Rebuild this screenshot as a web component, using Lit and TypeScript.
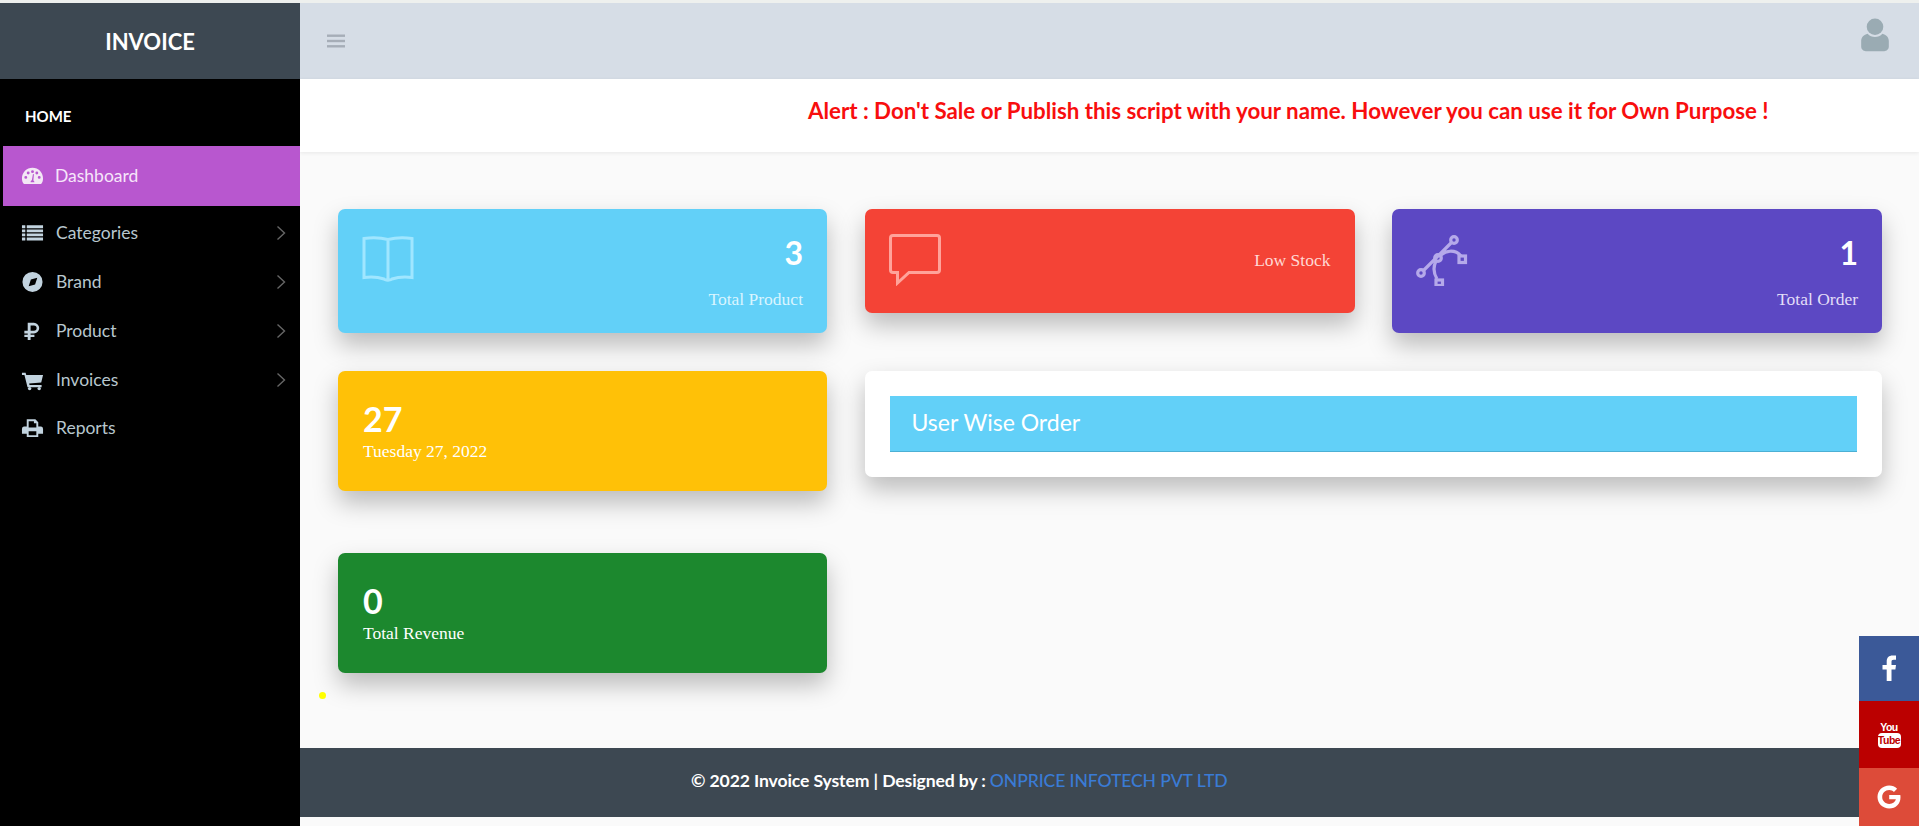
import { LitElement, html, css, svg } from "lit";
import { customElement } from "lit/decorators.js";

const navIcons: Record<string, unknown> = {
  gauge: svg`<path fill-rule="evenodd" d="M12 4C5.800 4 1 8.900 1 15c0 2 .5 3.600 1.400 5.200.2.400.5.600 1 .6h17.200c.5 0 .8-.2 1-.6.900-1.600 1.400-3.200 1.400-5.200 0-6.100-4.800-11-11-11zM5 15.500a1.500 1.500 0 1 1 0-3 1.500 1.500 0 0 1 0 3zm2.500-4.600a1.500 1.500 0 1 1 0-3 1.500 1.500 0 0 1 0 3zM12 9.500A1.500 1.500 0 1 1 12 6.500a1.500 1.500 0 0 1 0 3zm7 6a1.500 1.500 0 1 1 0-3 1.500 1.500 0 0 1 0 3zm-2.500-4.600a1.500 1.500 0 1 1 0-3 1.500 1.500 0 0 1 0 3zM14 19h-4c0-1 .6-1.800 1.300-2L12.500 10.500l1 .1-.6 6.500c.6.300 1.100 1 1.100 1.900z"/>`,
  list: svg`<path d="M1 4.500h3.500v3H1zM6 4.500h17v3H6zM1 8.800h3.500v3H1zM6 8.800h17v3H6zM1 13h3.500v3H1zM6 13h17v3H6zM1 17.300h3.500v3H1zM6 17.300h17v3H6z"/>`,
  compass: svg`<path fill-rule="evenodd" d="M12 2a10.500 10.500 0 1 0 0 21 10.500 10.500 0 0 0 0-21zM8 17l2.300-7.200L17 8l-2.300 7.200z"/>`,
  rub: svg`<path fill-rule="evenodd" d="M7 4h6.500a5.500 5.500 0 0 1 0 11h-3.500v1.500H14v2.400h-4V22H7v-3.100H3.500v-2.400H7V15H3.500v-2.700H7zm3 2.700v5.600h3.500a2.800 2.800 0 0 0 0-5.600z"/>`,
  cart: svg`<path d="M1 5h3.800l.7 2.200H23l-1.900 8-12.600 1 .4 1.600h12.600V20H6.800L3.600 7.200H1z"/><circle cx="9" cy="21.500" r="1.800"/><circle cx="19" cy="21.500" r="1.800"/>`,
  print: svg`<path fill-rule="evenodd" d="M6 3.500h9l3 3v4.500h3a2.500 2.500 0 0 1 2 2.500v5h-5V22H6v-3.500H1v-5A2.500 2.500 0 0 1 3 11h3zM8 5.500v6.500h8V7.500h-2.500v-2zM8 16v4h8v-4z"/>`,
};

const items = [
  { label: "Categories", icon: "list", arrow: true },
  { label: "Brand", icon: "compass", arrow: true },
  { label: "Product", icon: "rub", arrow: true },
  { label: "Invoices", icon: "cart", arrow: true },
  { label: "Reports", icon: "print", arrow: false },
];

@customElement("app-root")
export class AppRoot extends LitElement {
  static styles = css`
    :host { display: block; height: 826px; overflow: hidden; position: relative; background: #fff; font-family: "Lato", "Liberation Sans", sans-serif; }
    * { box-sizing: border-box; }
    .page { display: flex; height: 826px; padding-top: 3px; background: #eef0ee; }
    .side { width: 300px; flex: none; background: #000; display: flex; flex-direction: column; }
    .brand { height: 76px; background: #3d4852; color: #fff; font-size: 22px; font-weight: 700; display: flex; align-items: center; justify-content: center; }
    .home { height: 67px; display: flex; align-items: center; padding: 6px 0 0 25px; color: #fff; font-size: 15px; font-weight: 700; }
    .item { height: 49px; display: flex; align-items: center; color: #b8c7ce; font-size: 17.500px; padding-left: 21px; position: relative; }
    .item svg.ic { width: 23px; height: 23px; fill: #c2d3df; margin-right: 12px; flex: none; }
    .active { height: 60px; margin: 0 0 2px 3px; padding: 0 0 2px 18px; background: #b857cf; color: #f6e6fa; }
    .active svg.ic { fill: #f3e7f5; margin-right: 11px; }
    .last { padding-bottom: 2px; }
    .chev { position: absolute; right: 14px; top: 17px; width: 10px; height: 16px; fill: none; stroke: #666; stroke-width: 1.400; }
    .main { flex: 1; min-width: 0; background: #fafafa; display: flex; flex-direction: column; }
    .top { height: 76px; background: #d6dde6; display: flex; align-items: center; justify-content: space-between; padding: 0 30px 0 27px; flex: none; }
    .bars { width: 18px; height: 14px; fill: #a6adb7; }
    .user { width: 28px; height: 35px; fill: #9aabb3; margin-bottom: 12px; }
    .alert { height: 73px; flex: none; background: #fff; color: #f80e0e; font-size: 22.300px; font-weight: 700; padding: 18px 0 0 508px; box-shadow: 0 1px 4px rgba(0,0,0,.08); white-space: nowrap; }
    .grid { flex: 1; display: grid; grid-template-columns: 489px 490px 1fr; column-gap: 37.500px; align-content: start; align-items: start; padding: 57px 37px 0 38px; }
    .r2 { margin-top: 38px; }
    .r3 { margin-top: 62px; }
    .card { border-radius: 7px; color: #fff; box-shadow: 0 12px 24px rgba(0,0,0,.25); padding: 24px; display: flex; justify-content: space-between; }
    .card svg { width: 54px; height: 54px; fill: none; flex: none; margin-top: -1px; }
    .tall { height: 124px; }
    .right { text-align: right; font-family: "Liberation Serif", serif; font-size: 17.500px; display: flex; flex-direction: column; align-items: flex-end; }
    .num { font-family: "Lato", sans-serif; font-weight: 700; font-size: 32px; line-height: 38px; margin-bottom: 17px; padding-top: 1px; }
    .blue { background: #62d0f8; } .blue svg { stroke: #a0e6ff; } .blue .lbl { color: #d9f5ff; }
    .red { background: #f44336; height: 104px; align-items: flex-start; } .red svg { stroke: #ffa39a; } .red .lbl { color: #ffd9d4; margin-top: 17px; }
    .purple { background: #5c48c3; } .purple svg { stroke: #b5a9ea; } .purple .lbl { color: #e3def8; }
    .stat { height: 120px; display: block; padding: 29px 25px 0; font-family: "Liberation Serif", serif; font-size: 17.500px; line-height: 20px; }
    .stat .num { margin: 0 0 3px; padding: 0; display: block; font-size: 34px; line-height: 38px; }
    .yellow { background: #ffc107; } .green { background: #1c882e; }
    .panel { grid-column: span 2; background: #fff; height: 106px; padding: 25px; color: #fff; display: block; }
    .panel div { height: 56px; background: #62d0f8; border-bottom: 1px solid #4cb0d4; font-size: 23px; display: flex; align-items: center; padding: 0 0 4px 22px; }
    .foot { flex: none; height: 69px; background: #3d4852; margin-bottom: 9px; color: #fff; font-size: 17.600px; letter-spacing: -0.120px; font-weight: 700; padding: 22px 0 0 391px; white-space: nowrap; }
    .foot a { color: #3a7bd5; font-weight: 500; text-decoration: none; }
    .dot { position: absolute; left: 319px; top: 692px; width: 7px; height: 7px; border-radius: 50%; background: #ffff00; }
    .social { position: absolute; right: 0; top: 636px; width: 60px; display: flex; flex-direction: column; }
    .social > div { display: flex; align-items: center; justify-content: center; color: #fff; }
    .social svg { fill: #fff; }
    .fb { height: 65px; background: #3b5998; } .gp { height: 58px; background: #dd4b39; }
    .yt { height: 67px; background: #bb0000; flex-direction: column; font-family: "Liberation Sans", sans-serif; font-weight: 700; font-size: 10.500px; letter-spacing: -0.500px; }
    .you { line-height: 11px; }
    .tube { width: 23px; height: 15px; border-radius: 4px; background: #fff; color: #bb0000; line-height: 15px; text-align: center; }
    .fb svg { width: 16px; height: 26px; margin-bottom: 2px; } .gp svg { width: 24px; height: 24px; margin-bottom: 1px; }
  `;

  render() {
    return html`
      <div class="page">
        <aside class="side">
          <div class="brand">INVOICE</div>
          <div class="home">HOME</div>
          <div class="item active"><svg class="ic" viewBox="0 0 24 24">${navIcons.gauge}</svg>Dashboard</div>
          ${items.map((i) => html`
            <div class="item ${i.arrow ? "" : "last"}">
              <svg class="ic" viewBox="0 0 24 24">${navIcons[i.icon]}</svg>${i.label}
              ${i.arrow ? html`<svg class="chev" viewBox="0 0 10 16"><path d="M1.500 1.500 8.500 8l-7 6.500"/></svg>` : ""}
            </div>`)}
        </aside>
        <main class="main">
          <div class="top">
            <svg class="bars" viewBox="0 0 18 14"><rect y="0.500" width="18" height="2.400"/><rect y="5.800" width="18" height="2.400"/><rect y="11.100" width="18" height="2.400"/></svg>
            <svg class="user" viewBox="0 0 30 38"><circle cx="15" cy="9.500" r="9"/><path d="M7 17c2 2.500 5 3.500 8 3.500s6-1 8-3.500c4 .8 7 4 7 8v6c0 3-2.500 5-5 5H5c-2.500 0-5-2-5-5v-6c0-4 3-7.200 7-8z"/></svg>
          </div>
          <div class="alert">Alert : Don't Sale or Publish this script with your name. However you can use it for Own Purpose !</div>
          <div class="grid">
            <div class="card blue tall">
              <svg viewBox="0 0 54 54"><path stroke-width="3" d="M2 6.500c8-1 16-1 24 1 8-2 16-2 24-1v39c-8-1-14-.5-20 1.500-1 1.500-7 1.500-8 0-6-2-12-2.500-20-1.500zM26 7.500v40"/></svg>
              <div class="right"><span class="num">3</span><span class="lbl">Total Product</span></div>
            </div>
            <div class="card red">
              <svg viewBox="0 0 54 54"><path stroke-width="3" d="M4 3.500h44c1.500 0 2.500 1 2.500 2.500v32c0 1.500-1 2.500-2.500 2.500H20L8.500 51V40.500H4c-1.500 0-2.500-1-2.500-2.500V6c0-1.500 1-2.500 2.500-2.500z"/></svg>
              <div class="right"><span class="lbl">Low Stock</span></div>
            </div>
            <div class="card purple tall">
              <svg viewBox="0 0 54 54"><g stroke-width="3.200"><path d="M7 39 36 10M23 25c6-7 16-8 22-1M20 29c-3 6-2 13 1 18"/><circle cx="5" cy="41" r="3.300"/><circle cx="22" cy="26" r="3.300"/><circle cx="38" cy="8" r="3.300"/><rect x="43" y="24" width="6.500" height="6.500"/><rect x="20" y="48" width="6.500" height="5.500"/></g></svg>
              <div class="right"><span class="num">1</span><span class="lbl">Total Order</span></div>
            </div>
            <div class="card stat yellow r2"><span class="num">27</span>Tuesday 27, 2022</div>
            <div class="card panel r2"><div>User Wise Order</div></div>
            <div class="card stat green r3"><span class="num">0</span>Total Revenue</div>
          </div>
          <div class="foot">© 2022 Invoice System | Designed by : <a>ONPRICE INFOTECH PVT LTD</a></div>
        </main>
      </div>
      <div class="dot"></div>
      <div class="social">
        <div class="fb"><svg viewBox="0 0 16 26"><path d="M10.500 26V14.500h3.900l.6-4.600h-4.500V7c0-1.300.4-2.200 2.300-2.200H15V.6C14.500.5 13.100.4 11.500.4 8 .4 5.700 2.500 5.700 6.300v3.600H1.500v4.600h4.200V26z"/></svg></div>
        <div class="yt"><span class="you">You</span><span class="tube">Tube</span></div>
        <div class="gp"><svg viewBox="0 0 24 24"><path d="M12.200 10v4.300h6.700c-.6 2.700-2.900 4.600-6.700 4.600-4 0-7-3.100-7-6.900s3-6.900 7-6.900c1.900 0 3.500.7 4.700 1.800l3.200-3.200C18 1.700 15.300.5 12.200.5 5.700.5.500 5.600.5 12s5.200 11.500 11.700 11.500c6.800 0 11.300-4.700 11.300-11.300 0-.8-.1-1.500-.2-2.200z"/></svg></div>
      </div>
    `;
  }
}
